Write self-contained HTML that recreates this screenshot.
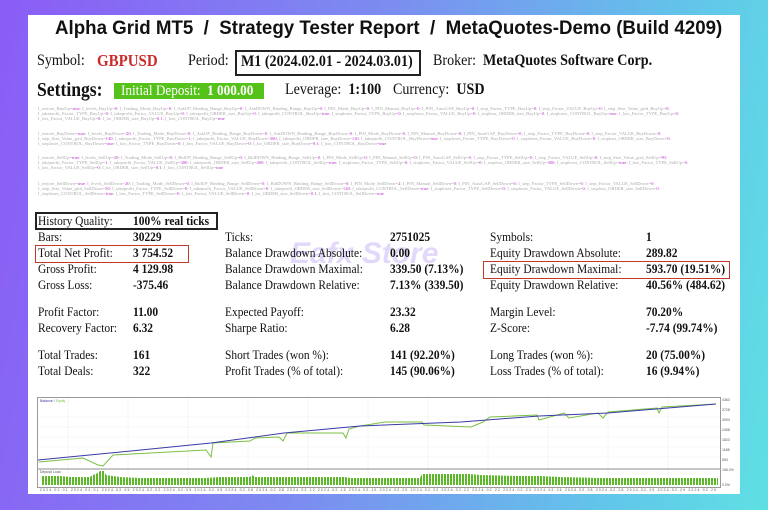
<!DOCTYPE html>
<html><head><meta charset="utf-8"><style>
*{margin:0;padding:0;box-sizing:border-box}
body{width:768px;height:510px;overflow:hidden;background:linear-gradient(100deg,#8b5cf6 0%,#7c8cf0 45%,#62c4ea 80%,#5fe0e4 100%);position:relative;font-family:"Liberation Serif",serif;color:#111}
.card{position:absolute;left:28px;top:15px;width:712px;height:479px;background:#fff}
.a{position:absolute;white-space:nowrap}
.n{transform:scaleX(.88);transform-origin:0 0}
.t{font-family:"Liberation Sans",sans-serif;font-weight:bold;font-size:19px;left:27px;top:3px;transform:scaleX(.985);transform-origin:0 0}
.s{font-size:16px}
.b{font-weight:bold}
.p{font-size:4.6px;line-height:5px;color:#aaa;left:10px;width:690px;white-space:normal;overflow:hidden;height:16px}
.p i{color:#c030d0;font-style:normal}
.st{font-size:13px;line-height:16px}
.v{font-weight:bold}
</style></head><body>
<div class="card">
<div class="a t">Alpha Grid MT5 &nbsp;/&nbsp; Strategy Tester Report &nbsp;/&nbsp; MetaQuotes-Demo (Build 4209)</div>
<div class="a s n" style="left:9px;top:37px">Symbol:</div>
<div class="a s b n" style="left:69px;top:36px;color:#cc2a2a;font-size:17px">GBPUSD</div>
<div class="a s n" style="left:160px;top:37px">Period:</div>
<div class="a" style="left:207px;top:35px;border:2px solid #222;width:186px;height:26px"></div>
<div class="a s b n" style="left:213px;top:38px">M1 (2024.02.01 - 2024.03.01)</div>
<div class="a s n" style="left:405px;top:37px">Broker: <b>&nbsp;MetaQuotes Software Corp.</b></div>
<div class="a b n" style="left:9px;top:64px;font-size:20px">Settings:</div>
<div class="a" style="left:86px;top:68px;width:150px;height:16px;background:#55c21a"></div>
<div class="a n" style="left:93px;top:68px;color:#fff;font-size:15px;line-height:16px">Initial Deposit: &nbsp;<b>1 000.00</b></div>
<div class="a s n" style="left:257px;top:66px">Leverage: &nbsp;<b>1:100</b></div>
<div class="a s n" style="left:365px;top:66px">Currency: &nbsp;<b>USD</b></div>
<div class="a p" style="top:91px">I_restore_BuyUp=<i>true</i>; I_levels_BuyUp=<i>0</i>; I_Trading_Mode_BuyUp=<i>0</i>; I_AskUP_Binding_Range_BuyUp=<i>0</i>; I_AskDOWN_Binding_Range_BuyUp=<i>0</i>; I_PIN_Mode_BuyUp=<i>0</i>; I_PIN_Manual_BuyUp=<i>0</i>; I_PIN_AutoGAP_BuyUp=<i>0</i>; I_step_Factor_TYPE_BuyUp=<i>0</i>; I_step_Factor_VALUE_BuyUp=<i>0</i>; I_step_Size_Value_grid_BuyUp=<i>0</i>; I_takeprofit_Factor_TYPE_BuyUp=<i>0</i>; I_takeprofit_Factor_VALUE_BuyUp=<i>0</i>; I_takeprofit_ORDER_size_BuyUp=<i>0</i>; I_takeprofit_CONTROL_BuyUp=<i>true</i>; I_stoploses_Factor_TYPE_BuyUp=<i>0</i>; I_stoploses_Factor_VALUE_BuyUp=<i>0</i>; I_stoploss_ORDER_size_BuyUp=<i>0</i>; I_stoploses_CONTROL_BuyUp=<i>true</i>; I_lots_Factor_TYPE_BuyUp=<i>0</i>; I_lots_Factor_VALUE_BuyUp=<i>0</i>; I_lot_ORDER_size_BuyUp=<i>0.1</i>; I_lots_CONTROL_BuyUp=<i>true</i></div>
<div class="a p" style="top:116px">I_restore_BuyDown=<i>true</i>; I_levels_BuyDown=<i>20</i>; I_Trading_Mode_BuyDown=<i>0</i>; I_AskUP_Binding_Range_BuyDown=<i>0</i>; I_AskDOWN_Binding_Range_BuyDown=<i>0</i>; I_PIN_Mode_BuyDown=<i>0</i>; I_PIN_Manual_BuyDown=<i>0</i>; I_PIN_AutoGAP_BuyDown=<i>0</i>; I_step_Factor_TYPE_BuyDown=<i>0</i>; I_step_Factor_VALUE_BuyDown=<i>0</i>; I_step_Size_Value_grid_BuyDown=<i>140</i>; I_takeprofit_Factor_TYPE_BuyDown=<i>1</i>; I_takeprofit_Factor_VALUE_BuyDown=<i>300</i>; I_takeprofit_ORDER_size_BuyDown=<i>110</i>; I_takeprofit_CONTROL_BuyDown=<i>true</i>; I_stoploses_Factor_TYPE_BuyDown=<i>0</i>; I_stoploses_Factor_VALUE_BuyDown=<i>0</i>; I_stoploss_ORDER_size_BuyDown=<i>0</i>; I_stoploses_CONTROL_BuyDown=<i>true</i>; I_lots_Factor_TYPE_BuyDown=<i>0</i>; I_lots_Factor_VALUE_BuyDown=<i>0</i>; I_lot_ORDER_size_BuyDown=<i>0.1</i>; I_lots_CONTROL_BuyDown=<i>true</i></div>
<div class="a p" style="top:140px">I_restore_SellUp=<i>true</i>; I_levels_SellUp=<i>20</i>; I_Trading_Mode_SellUp=<i>0</i>; I_BidUP_Binding_Range_SellUp=<i>0</i>; I_BidDOWN_Binding_Range_SellUp=<i>0</i>; I_PIN_Mode_SellUp=<i>0</i>; I_PIN_Manual_SellUp=<i>0</i>; I_PIN_AutoGAP_SellUp=<i>0</i>; I_step_Factor_TYPE_SellUp=<i>0</i>; I_step_Factor_VALUE_SellUp=<i>0</i>; I_step_Size_Value_grid_SellUp=<i>90</i>; I_takeprofit_Factor_TYPE_SellUp=<i>1</i>; I_takeprofit_Factor_VALUE_SellUp=<i>300</i>; I_takeprofit_ORDER_size_SellUp=<i>490</i>; I_takeprofit_CONTROL_SellUp=<i>true</i>; I_stoploses_Factor_TYPE_SellUp=<i>0</i>; I_stoploses_Factor_VALUE_SellUp=<i>0</i>; I_stoploss_ORDER_size_SellUp=<i>300</i>; I_stoploses_CONTROL_SellUp=<i>true</i>; I_lots_Factor_TYPE_SellUp=<i>0</i>; I_lots_Factor_VALUE_SellUp=<i>0</i>; I_lot_ORDER_size_SellUp=<i>0.1</i>; I_lots_CONTROL_SellUp=<i>true</i></div>
<div class="a p" style="top:166px">I_restore_SellDown=<i>true</i>; I_levels_SellDown=<i>20</i>; I_Trading_Mode_SellDown=<i>0</i>; I_BidUP_Binding_Range_SellDown=<i>0</i>; I_BidDOWN_Binding_Range_SellDown=<i>0</i>; I_PIN_Mode_SellDown=<i>2</i>; I_PIN_Manual_SellDown=<i>0</i>; I_PIN_AutoGAP_SellDown=<i>0</i>; I_step_Factor_TYPE_SellDown=<i>0</i>; I_step_Factor_VALUE_SellDown=<i>0</i>; I_step_Size_Value_grid_SellDown=<i>50</i>; I_takeprofit_Factor_TYPE_SellDown=<i>0</i>; I_takeprofit_Factor_VALUE_SellDown=<i>0</i>; I_takeprofit_ORDER_size_SellDown=<i>120</i>; I_takeprofit_CONTROL_SellDown=<i>true</i>; I_stoploses_Factor_TYPE_SellDown=<i>0</i>; I_stoploses_Factor_VALUE_SellDown=<i>0</i>; I_stoploss_ORDER_size_SellDown=<i>0</i>; I_stoploses_CONTROL_SellDown=<i>true</i>; I_lots_Factor_TYPE_SellDown=<i>0</i>; I_lots_Factor_VALUE_SellDown=<i>0</i>; I_lot_ORDER_size_SellDown=<i>0.1</i>; I_lots_CONTROL_SellDown=<i>true</i></div>

<div class="a" style="left:7px;top:197px;width:183px;height:18px;border:2px solid #222"></div>
<div class="a" style="left:7px;top:230px;width:154px;height:18px;border:1.5px solid #c0392b"></div>
<div class="a" style="left:455px;top:246px;width:247px;height:18px;border:1.5px solid #c0392b"></div>
<div class="a" style="left:262px;top:222px;font-family:'Liberation Sans',sans-serif;font-weight:bold;font-size:30px;color:rgba(120,60,230,.2);font-style:italic">Eafx Store</div>

<div class="a st n" style="left:10px;top:198px">History Quality:<br>Bars:<br>Total Net Profit:<br>Gross Profit:<br>Gross Loss:<br><div style="height:11px"></div>Profit Factor:<br>Recovery Factor:<br><div style="height:11px"></div>Total Trades:<br>Total Deals:</div>
<div class="a st v n" style="left:105px;top:198px">100% real ticks<br>30229<br>3 754.52<br>4 129.98<br>-375.46<br><div style="height:11px"></div>11.00<br>6.32<br><div style="height:11px"></div>161<br>322</div>
<div class="a st n" style="left:197px;top:198px"><br>Ticks:<br>Balance Drawdown Absolute:<br>Balance Drawdown Maximal:<br>Balance Drawdown Relative:<br><div style="height:11px"></div>Expected Payoff:<br>Sharpe Ratio:<br><div style="height:11px"></div>Short Trades (won %):<br>Profit Trades (% of total):</div>
<div class="a st v n" style="left:362px;top:198px"><br>2751025<br>0.00<br>339.50 (7.13%)<br>7.13% (339.50)<br><div style="height:11px"></div>23.32<br>6.28<br><div style="height:11px"></div>141 (92.20%)<br>145 (90.06%)</div>
<div class="a st n" style="left:462px;top:198px"><br>Symbols:<br>Equity Drawdown Absolute:<br>Equity Drawdown Maximal:<br>Equity Drawdown Relative:<br><div style="height:11px"></div>Margin Level:<br>Z-Score:<br><div style="height:11px"></div>Long Trades (won %):<br>Loss Trades (% of total):</div>
<div class="a st v n" style="left:618px;top:198px"><br>1<br>289.82<br>593.70 (19.51%)<br>40.56% (484.62)<br><div style="height:11px"></div>70.20%<br>-7.74 (99.74%)<br><div style="height:11px"></div>20 (75.00%)<br>16 (9.94%)</div>
</div>

<svg class="a" style="left:0;top:0" width="768" height="510" viewBox="0 0 768 510">
<defs><pattern id="st" width="3" height="20" patternUnits="userSpaceOnUse"><rect width="2" height="20" fill="#5cb82a"/></pattern></defs>
<rect x="37.5" y="397.5" width="683" height="90" fill="#fff" stroke="#999"/>
<g stroke="#e2e2e2" stroke-width="0.6" stroke-dasharray="1 1">
<line x1="38" y1="417" x2="720" y2="417"/><line x1="38" y1="427" x2="720" y2="427"/><line x1="38" y1="437" x2="720" y2="437"/><line x1="38" y1="447" x2="720" y2="447"/><line x1="38" y1="457" x2="720" y2="457"/>
<line x1="68" y1="398" x2="68" y2="487"/><line x1="128" y1="398" x2="128" y2="487"/><line x1="188" y1="398" x2="188" y2="487"/><line x1="248" y1="398" x2="248" y2="487"/><line x1="308" y1="398" x2="308" y2="487"/><line x1="368" y1="398" x2="368" y2="487"/><line x1="428" y1="398" x2="428" y2="487"/><line x1="488" y1="398" x2="488" y2="487"/><line x1="548" y1="398" x2="548" y2="487"/><line x1="608" y1="398" x2="608" y2="487"/><line x1="668" y1="398" x2="668" y2="487"/>
</g>
<line x1="38" y1="469" x2="720" y2="469" stroke="#666" stroke-width="0.8"/>
<polyline fill="none" stroke="#7bc043" stroke-width="1" points="39,462 83,458 98,465 103,466 113,455 206,450 211,457 213,443 250,441 255,438 279,437 283,441 287,433 343,433 346,438 349,429 360,426 385,422 422,422 424,425 471,427 483,422 490,417 537,415 539,420 564,413 569,418 598,413 603,418 608,412 657,408 659,413 662,407 716,404"/>
<polyline fill="none" stroke="#3a3aa8" stroke-width="1" points="38,460 110,453 211,443 284,433 360,426 461,422 539,416 608,413 716,404"/>
<text x="40" y="402" font-family="Liberation Sans" font-size="3.5" fill="#3a3aa8">Balance / <tspan fill="#7bc043">Equity</tspan></text>
<text x="40" y="473" font-family="Liberation Sans" font-size="3.5" fill="#555">Deposit Load</text>
<path fill="url(#st)" d="M41,485 L41,476 60,476 70,477 90,477 93,475 98,473 100,471 104,471 106,475 120,477 140,478 205,478 220,477 250,477 252,475 255,477 315,477 345,477 350,478 420,478 422,474 470,474 480,475 520,476 538,476 540,476 560,477 600,478 718,478 718,485 Z"/>
<g font-family="Liberation Sans" font-size="3.5" fill="#555">
<text x="722" y="401">4363</text><text x="722" y="411">3728</text><text x="722" y="421">3093</text><text x="722" y="431">2458</text><text x="722" y="441">1823</text><text x="722" y="451">1188</text><text x="722" y="461">553</text><text x="722" y="471">156.2%</text><text x="722" y="486">0.0%</text>
<text x="40" y="491" textLength="676" lengthAdjust="spacing">2024.02.01 2024.02.01 2024.02.05 2024.02.02 2024.02.05 2024.02.05 2024.02.08 2024.02.08 2024.02.12 2024.02.15 2024.02.19 2024.02.20 2024.02.22 2024.02.22 2024.02.22 2024.02.23 2024.02.26 2024.02.28 2024.02.28 2024.02.29 2024.02.29 2024.02.29</text>
</g>
</svg>
</body></html>
